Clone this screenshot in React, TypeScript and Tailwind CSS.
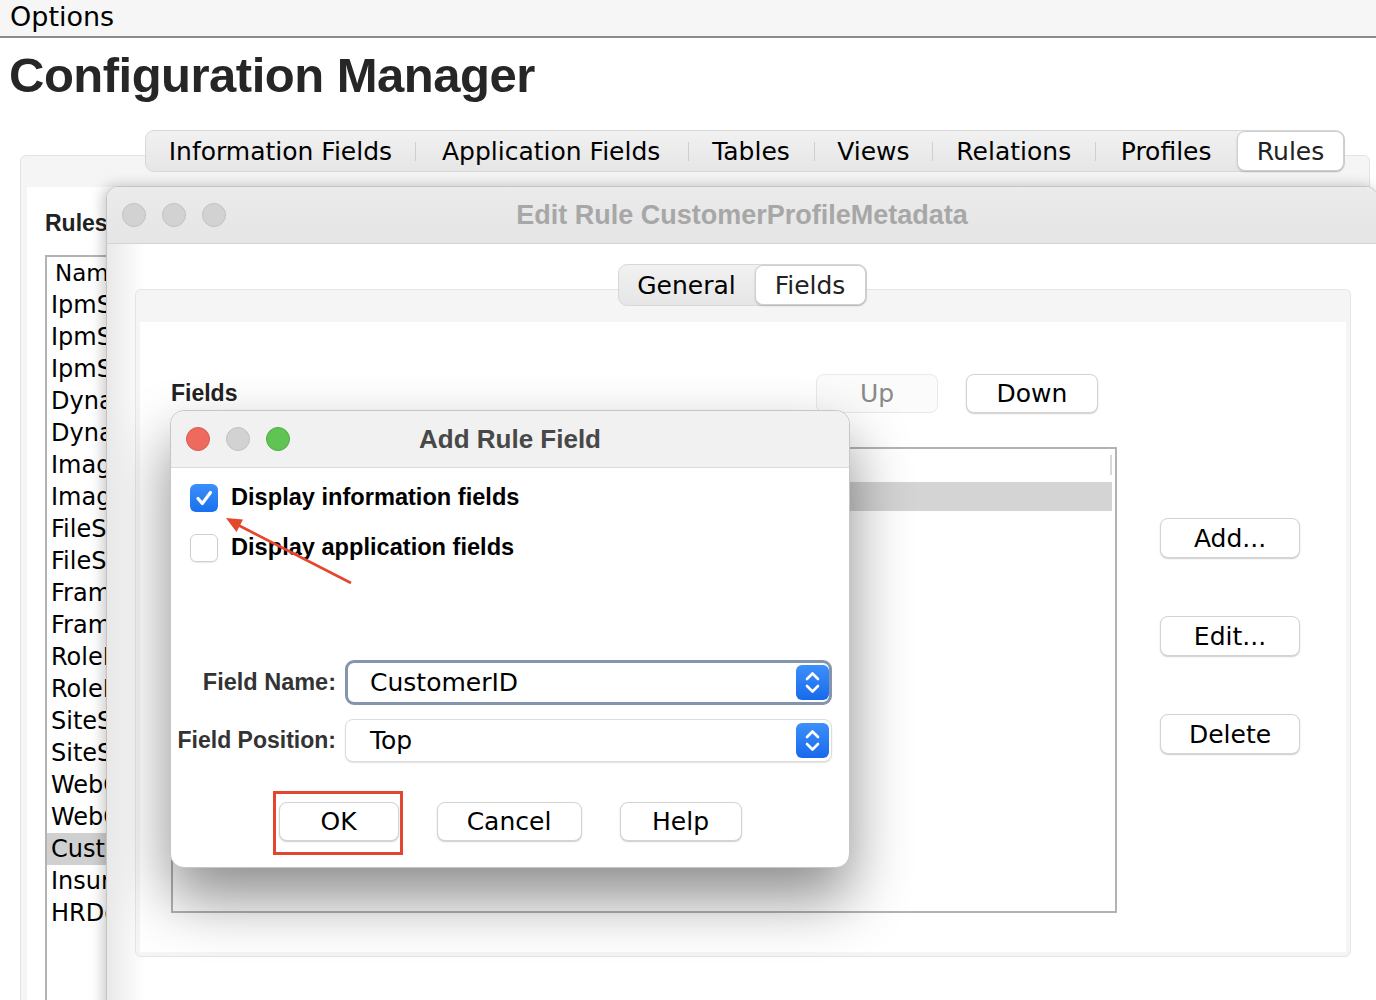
import React from "react";

const SANS = "font-['DejaVu_Sans',sans-serif]";
const HELV = "font-['Liberation_Sans',Arial,sans-serif]";

function MacButton({
  children,
  className = "",
  disabled = false,
}: {
  children: React.ReactNode;
  className?: string;
  disabled?: boolean;
}) {
  return (
    <div
      className={`relative flex items-center justify-center rounded-[8px] border ${
        disabled
          ? "border-[#e9e9e9] bg-[#fbfbfb] text-[#8a8a8a]"
          : "border-[#d3d3d3] bg-white text-black shadow-[0_1px_1.5px_rgba(0,0,0,0.2)]"
      } ${SANS} text-[25px] leading-none ${className}`}
    >
      {children}
    </div>
  );
}

function Stepper() {
  return (
    <div className="flex h-[35px] w-[33px] shrink-0 items-center justify-center rounded-[6px] bg-linear-to-b from-[#3d8ffa] to-[#1769ec]">
      <svg width="33" height="35" viewBox="0 0 33 35" fill="none" stroke="white" strokeWidth="2.6" strokeLinecap="round" strokeLinejoin="round">
        <path d="M11 14 L16.5 8.5 L22 14" />
        <path d="M11 21 L16.5 26.5 L22 21" />
      </svg>
    </div>
  );
}

function Light({ color }: { color: string }) {
  const map: Record<string, string> = {
    gray: "bg-[#d2d2d2] border-[#c2c2c2]",
    red: "bg-[#ee6a5f] border-[#d95b50]",
    green: "bg-[#5fc453] border-[#4eac43]",
  };
  return <div className={`h-[24px] w-[24px] rounded-full border ${map[color]}`} />;
}

const outerTabs = [
  { label: "Information Fields", w: 269 },
  { label: "Application Fields", w: 273 },
  { label: "Tables", w: 127 },
  { label: "Views", w: 118 },
  { label: "Relations", w: 163 },
  { label: "Profiles", w: 142 },
];

const rules = [
  "IpmSystemRules",
  "IpmSecurityRules",
  "IpmStorageRules",
  "DynamicContent",
  "DynamicFolders",
  "ImageMetadata",
  "ImageProfiles",
  "FileStoreRules",
  "FileStorage",
  "FrameworkRules",
  "FrameworkTables",
  "RoleBasedAccess",
  "RoleBasedViews",
  "SiteStructure",
  "SiteStudio",
  "WebContent",
  "WebCenter",
  "CustomerProfileMetadata",
  "InsuranceClaims",
  "HRDocuments",
];

export default function App() {
  return (
    <div className="relative h-[1000px] w-[1376px] overflow-hidden bg-white text-black">
      {/* Options header */}
      <div className={`flex h-[38px] items-center border-b-2 border-[#8a8a8a] bg-[#f6f6f6] pb-[3px] pl-[10px] ${SANS} text-[27px] leading-none`}>
        Options
      </div>

      {/* Title */}
      <div className={`mt-[13px] pl-[9px] ${HELV} text-[49px] font-bold leading-none tracking-[-0.5px] text-[#262626]`}>
        Configuration Manager
      </div>

      {/* Outer tabs */}
      <div className="relative z-10 ml-[145px] mt-[30px] flex h-[42px] w-[1200px] items-center rounded-[9px] border border-[#d8d8d8] bg-linear-to-b from-[#f1f1f1] to-[#e6e6e6]">
        {outerTabs.map((t, i) => (
          <div
            key={t.label}
            className={`relative flex h-full items-center justify-center ${SANS} text-[25px] leading-none text-black`}
            style={{ width: t.w }}
          >
            {i > 0 && <span className="absolute left-0 top-[11px] h-[19px] w-px bg-[#cfcfcf]" />}
            {t.label}
          </div>
        ))}
        <div className={`flex h-[40px] w-[107px] items-center justify-center rounded-[8px] border border-[#d0d0d0] bg-white shadow-[0_1px_2px_rgba(0,0,0,0.18)] ${SANS} text-[25px] leading-none text-[#222]`}>
          Rules
        </div>
      </div>

      {/* Outer panel */}
      <div className="-mt-[17px] ml-[20px] mr-[6px] h-[900px] rounded-[6px] border border-[#e3e3e3] bg-[#f5f5f5] px-[6px] pt-[31px]">
        <div className="h-full bg-white pl-[18px]">
          <div className={`flex items-center pt-[21px] ${HELV} text-[23px] font-bold leading-none text-[#222]`} style={{ height: 51 }}>
            Rules
          </div>
          <div className="mt-[17px] h-[800px] w-[420px] border-2 border-[#b3b3b3] bg-white">
            <div className={`flex h-[32px] items-center pl-[8px] ${SANS} text-[23px] leading-none`}>Name</div>
            {rules.map((r, i) => (
              <div
                key={r + i}
                className={`flex h-[32px] items-center pl-[4px] ${SANS} text-[24px] leading-none ${
                  i === 17 ? "bg-[#d0d0d0]" : ""
                }`}
              >
                {r}
              </div>
            ))}
          </div>
        </div>
      </div>

      {/* Edit Rule window */}
      <div className="absolute left-[106px] top-[186px] flex h-[840px] w-[1272px] flex-col overflow-hidden rounded-t-[12px] border border-[#c4c4c4] bg-white shadow-[-3px_0_14px_rgba(0,0,0,0.22)]">
        <div className="grid h-[57px] shrink-0 grid-cols-[1fr_auto_1fr] items-center border-b border-[#d4d4d4] bg-linear-to-b from-[#ebebeb] to-[#e5e5e5]">
          <div className="flex gap-[16px] pl-[15px]">
            <Light color="gray" />
            <Light color="gray" />
            <Light color="gray" />
          </div>
          <div className={`${HELV} text-[27px] font-bold leading-none text-[#a7a7a7]`}>Edit Rule CustomerProfileMetadata</div>
          <div />
        </div>

        <div className="flex-1 bg-linear-to-r from-[#e9e9e9] from-0% to-white to-3% pt-[20px]">
          {/* inner tabs */}
          <div className="relative z-10 mx-auto flex h-[42px] w-[249px] items-center rounded-[9px] border border-[#d8d8d8] bg-linear-to-b from-[#f1f1f1] to-[#e6e6e6]">
            <div className={`flex h-full w-[136px] items-center justify-center ${SANS} text-[25px] leading-none`}>General</div>
            <div className={`flex h-[40px] w-[111px] items-center justify-center rounded-[8px] border border-[#d0d0d0] bg-white shadow-[0_1px_2px_rgba(0,0,0,0.18)] ${SANS} text-[25px] leading-none text-[#222]`}>
              Fields
            </div>
          </div>

          {/* inner panel */}
          <div className="-mt-[17px] ml-[28px] h-[668px] w-[1216px] rounded-[6px] border border-[#e4e4e4] bg-[#f5f5f5] px-[4px] pb-[4px] pt-[32px]">
            <div className="flex h-full bg-white pl-[31px] pt-[52px]">
              <div className="flex w-[946px] flex-col">
                <div className="flex h-[39px] items-center">
                  <div className={`${HELV} text-[23px] font-bold leading-none text-[#222]`}>Fields</div>
                  <div className="flex-1" />
                  <MacButton disabled className="h-[39px] w-[122px]">Up</MacButton>
                  <MacButton className="ml-[28px] mr-[19px] h-[39px] w-[132px]">Down</MacButton>
                </div>
                <div className="mt-[34px] flex h-[466px] flex-col border-2 border-[#b3b3b3] bg-white">
                  <div className="mr-[3px] mt-[6px] h-[20px] w-[2px] self-end bg-[#d8d8d8]" />
                  <div className="mr-[3px] mt-[7px] h-[29px] bg-[#d4d4d4]" />
                </div>
              </div>
              <div className="ml-[43px] flex flex-col pt-[144px]">
                <MacButton className="h-[40px] w-[140px]">Add...</MacButton>
                <MacButton className="mt-[58px] h-[40px] w-[140px]">Edit...</MacButton>
                <MacButton className="mt-[58px] h-[40px] w-[140px]">Delete</MacButton>
              </div>
            </div>
          </div>
        </div>
      </div>

      {/* Add Rule Field dialog */}
      <div className="absolute left-[170px] top-[410px] flex h-[458px] w-[680px] flex-col rounded-[14px] border border-[#c6c6c6] bg-white shadow-[0_30px_60px_rgba(0,0,0,0.45)]">
        <div className="grid h-[57px] shrink-0 grid-cols-[1fr_auto_1fr] items-center rounded-t-[14px] border-b border-[#dcdcdc] bg-[#f1f1f1]">
          <div className="flex gap-[16px] pl-[15px]">
            <Light color="red" />
            <Light color="gray" />
            <Light color="green" />
          </div>
          <div className={`${HELV} text-[26px] font-bold leading-none text-[#484848]`}>Add Rule Field</div>
          <div />
        </div>

        <div className="flex flex-col pt-[16px]">
          <div className="flex h-[28px] items-center gap-[13px] pl-[19px]">
            <div className="flex h-[28px] w-[28px] items-center justify-center rounded-[6px] bg-linear-to-b from-[#3b8ff9] to-[#1670ee]">
              <svg width="28" height="28" viewBox="0 0 28 28" fill="none" stroke="white" strokeWidth="3.2" strokeLinecap="round" strokeLinejoin="round">
                <path d="M8 14.5 L12.3 19.5 L20.5 8.5" />
              </svg>
            </div>
            <span className={`${HELV} whitespace-nowrap text-[23.6px] font-bold leading-none text-black`}>Display information fields</span>
          </div>
          <div className="mt-[22px] flex h-[28px] items-center gap-[13px] pl-[19px]">
            <div className="h-[28px] w-[28px] rounded-[6px] border border-[#cfcfcf] bg-white shadow-[0_1px_1px_rgba(0,0,0,0.08)]" />
            <span className={`${HELV} whitespace-nowrap text-[23.6px] font-bold leading-none text-black`}>Display application fields</span>
          </div>

          <div className="mt-[98px] grid grid-cols-[159px_1fr] items-center gap-x-[9px] gap-y-[14px] pl-[6px] pr-[17px]">
            <div className={`whitespace-nowrap text-right ${HELV} text-[23.5px] font-bold leading-none text-[#333]`}>Field Name:</div>
            <div className="flex h-[45px] items-center rounded-[9px] border-[3px] border-[#8495ad] bg-white pl-[22px]">
              <span className={`flex-1 ${SANS} text-[25px] leading-none text-black`}>CustomerID</span>
              <Stepper />
            </div>
            <div className={`whitespace-nowrap text-right ${HELV} text-[23px] font-bold leading-none text-[#333]`}>Field Position:</div>
            <div className="flex h-[43px] items-center rounded-[8px] border border-[#dddddd] bg-white pl-[24px] pr-[2px] shadow-[0_1px_1.5px_rgba(0,0,0,0.12)]">
              <span className={`flex-1 ${SANS} text-[25px] leading-none text-black`}>Top</span>
              <Stepper />
            </div>
          </div>

          <div className="mt-[40px] flex justify-center gap-[38px]">
            <MacButton className="h-[39px] w-[120px]">
              OK
              <span className="pointer-events-none absolute -bottom-[15px] -left-[7px] -right-[5px] -top-[12px] border-[3px] border-[#e2462e]" />
            </MacButton>
            <MacButton className="h-[39px] w-[145px]">Cancel</MacButton>
            <MacButton className="h-[39px] w-[122px]">Help</MacButton>
          </div>
        </div>

        {/* red annotation arrow */}
        <svg className="pointer-events-none absolute left-0 top-0 overflow-visible" width="680" height="458" viewBox="0 0 680 458">
          <line x1="180" y1="172" x2="67" y2="114" stroke="#e5472d" strokeWidth="2.6" />
          <polygon points="55,107 72,108.5 65.5,121" fill="#e5472d" />
        </svg>
      </div>
    </div>
  );
}
